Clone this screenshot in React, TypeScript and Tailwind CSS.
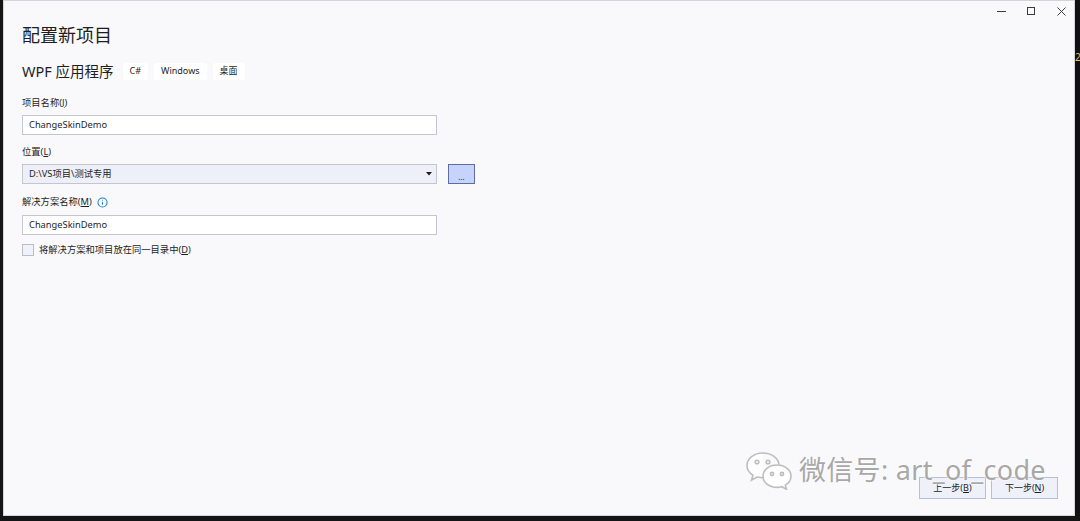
import { Info } from 'lucide-react'

const font = { fontFamily: '"Noto Sans", "Noto Sans CJK SC", sans-serif' }

function Tag({ children }: { children: React.ReactNode }) {
  return (
    <span className="h-[17px] px-[7px] flex items-center bg-white rounded-[3px] text-[9px] text-[#1e1e1e]">
      {children}
    </span>
  )
}

function Label({ children }: { children: React.ReactNode }) {
  return <div className="text-[9.3px] leading-[14px] text-[#1e1e1e]">{children}</div>
}

function TextInput({ value }: { value: string }) {
  return (
    <div className="w-[415px] h-[20px] border border-[#c3c5cf] bg-white flex items-center pl-[6px] text-[9.3px] text-[#1e1e1e]">
      {value}
    </div>
  )
}

function WeChatLogo() {
  return (
    <svg width="48" height="40" viewBox="0 0 48 40" fill="none" stroke="#bdbdbd" strokeWidth="1.6">
      <path d="M18 3C9 3 2 8.5 2 15.5c0 4 2.3 7.4 6 9.7L6.5 30l5.6-3c1.9.5 3.8.8 5.9.8" fill="white" />
      <path d="M18 3c8.5 0 15.5 5 16 11.8" />
      <circle cx="12" cy="12" r="1.8" />
      <circle cx="23" cy="12" r="1.8" />
      <path d="M32 15c-8 0-14 5-14 11.2S24 37.4 32 37.4c1.7 0 3.3-.2 4.8-.7l4.7 2.6-1.2-4.2c3.4-2 5.7-5.2 5.7-8.9C46 20 40 15 32 15z" fill="white" />
      <circle cx="27" cy="24" r="1.6" />
      <circle cx="37" cy="24" r="1.6" />
    </svg>
  )
}

export default function App() {
  return (
    <div className="w-[1080px] h-[521px] bg-[#1b1b1b] flex flex-col overflow-hidden" style={font}>
      <div className="flex h-[516px]">
        <div className="w-[3px] bg-[#151515]" />
        <div className="relative w-[1072px] h-full bg-[#f9f9fb] border border-[#d4d4dc] flex flex-col">
          {/* window controls */}
          <div className="absolute top-[4px] right-[5px] flex items-center gap-[14px] text-[#3b3b3b]">
            <div className="w-[16px] h-[12px] flex items-center justify-center">
              <div className="w-[9px] h-[1px] bg-[#3b3b3b]" />
            </div>
            <div className="w-[16px] h-[12px] flex items-center justify-center">
              <div className="w-[8px] h-[8px] border border-[#3b3b3b]" />
            </div>
            <div className="w-[16px] h-[12px] flex items-center justify-center">
              <svg width="9" height="9" viewBox="0 0 9 9" stroke="#3b3b3b" strokeWidth="1">
                <path d="M0.5 0.5l8 8M8.5 0.5l-8 8" />
              </svg>
            </div>
          </div>

          <div className="pl-[18px] pt-[21px] flex flex-col">
            <h1 className="text-[18px] leading-[26px] text-[#1e1e1e]">配置新项目</h1>
            <div className="mt-[13px] flex items-center gap-[6px]">
              <span className="text-[14.5px] leading-[20px] text-[#1e1e1e] mr-[3px]">WPF 应用程序</span>
              <Tag>C#</Tag>
              <Tag>Windows</Tag>
              <Tag>桌面</Tag>
            </div>

            <div className="mt-[15px]">
              <Label>
                项目名称(<span className="underline">J</span>)
              </Label>
            </div>
            <div className="mt-[5px]">
              <TextInput value="ChangeSkinDemo" />
            </div>

            <div className="mt-[10px]">
              <Label>
                位置(<span className="underline">L</span>)
              </Label>
            </div>
            <div className="mt-[5px] flex items-center gap-[11px]">
              <div className="w-[415px] h-[20px] border border-[#c3c5cf] bg-[#eef0f9] flex items-center justify-between pl-[6px] pr-[4px] text-[9.3px] text-[#1e1e1e]">
                <span>D:\VS项目\测试专用</span>
                <svg width="6" height="4" viewBox="0 0 6 4">
                  <path d="M0 0h6L3 3.5z" fill="#1e1e1e" />
                </svg>
              </div>
              <div className="w-[27px] h-[20px] bg-[#c6d3fb] border border-[#5d6da3] flex items-center justify-center text-[8px] text-[#1e1e1e] leading-none pt-[5px]">
                ...
              </div>
            </div>

            <div className="mt-[11px] flex items-center gap-[5px]">
              <Label>
                解决方案名称(<span className="underline">M</span>)
              </Label>
              <Info size={11} color="#1a7fc8" strokeWidth={2.2} />
            </div>
            <div className="mt-[6px]">
              <TextInput value="ChangeSkinDemo" />
            </div>

            <div className="mt-[8px] flex items-center gap-[5px]">
              <div className="w-[12px] h-[12px] border border-[#b9bdc9] bg-[#f0f2fa]" />
              <span className="text-[9.3px] leading-[14px] text-[#1e1e1e]">
                将解决方案和项目放在同一目录中(<span className="underline">D</span>)
              </span>
            </div>
          </div>

          <div className="mt-auto mb-[16px] mr-[16px] flex justify-end gap-[5px]">
            <div className="w-[67px] h-[22px] border border-[#b7bfd6] bg-[#eef1fa] flex items-center justify-center text-[9px] text-[#1e1e1e]">
              上一步(<span className="underline">B</span>)
            </div>
            <div className="w-[67px] h-[22px] border border-[#b7bfd6] bg-[#eef1fa] flex items-center justify-center text-[9px] text-[#1e1e1e]">
              下一步(<span className="underline">N</span>)
            </div>
          </div>

          {/* watermark */}
          <div className="absolute left-[741px] top-[449px] flex items-center gap-[6px] pointer-events-none">
            <WeChatLogo />
            <span
              className="text-[27px] leading-[32px] text-[#a8a8a8] tracking-[0.3px]"
              style={{ textShadow: '0 0 2px #fff, 0 0 2px #fff' }}
            >
              微信号: art_of_code
            </span>
          </div>
        </div>
        <div className="flex-1 bg-[#111] relative">
          <span className="absolute top-[50px] left-0 text-[10px] text-[#e6c46a]">2</span>
        </div>
      </div>
      <div className="flex-1 bg-[#141414]" />
    </div>
  )
}
